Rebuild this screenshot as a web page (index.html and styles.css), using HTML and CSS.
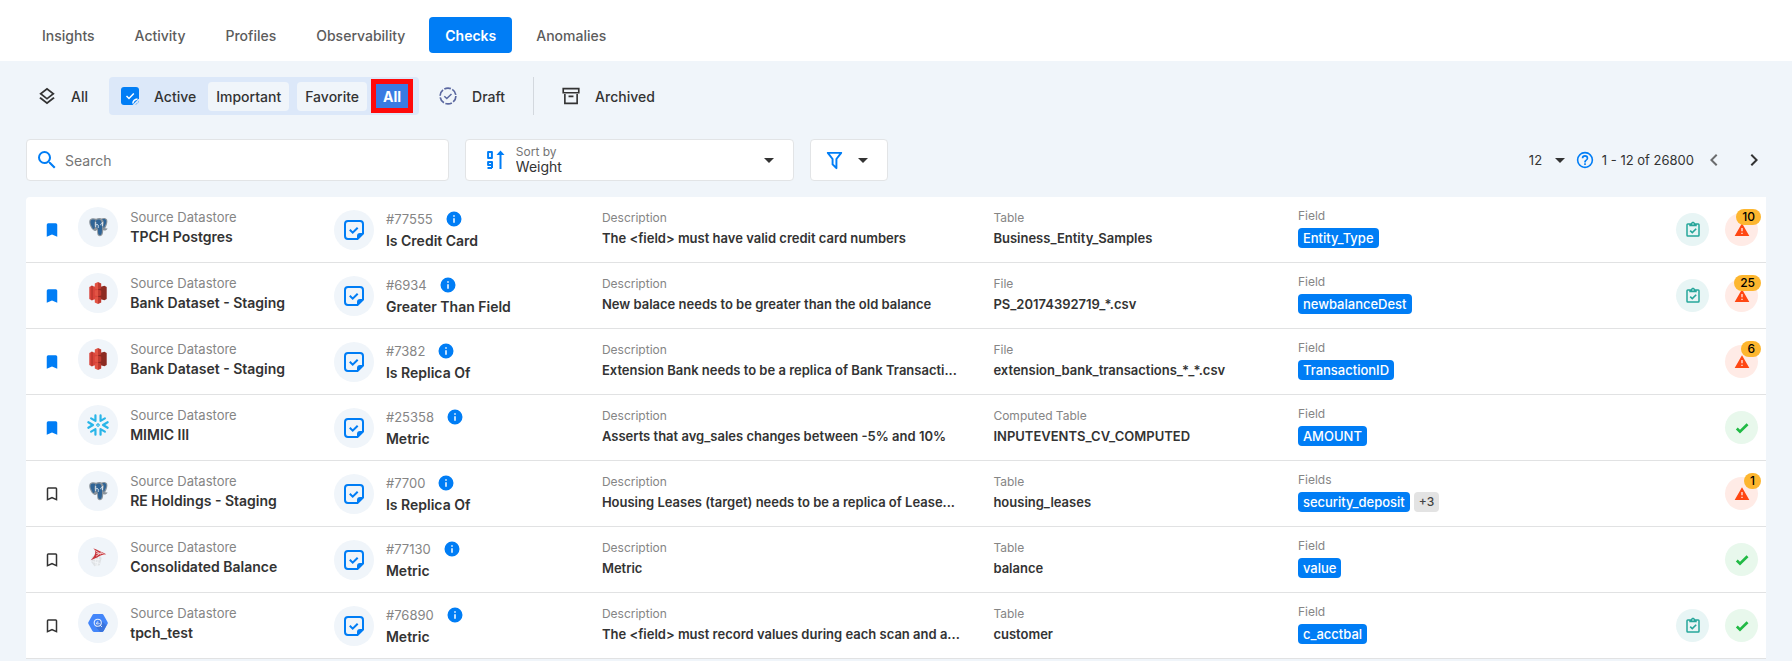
FILE: index.html
```html
<!DOCTYPE html>
<html lang="en">
<head>
    <meta charset="UTF-8">
    <meta name="viewport" content="width=device-width, initial-scale=1.0">
    <title>Checks</title>
    <link rel="stylesheet" href="styles.css">
</head>
<body>
    <!-- Icon sprite -->
    <svg class="sprite" aria-hidden="true">
        <symbol id="i-layers" viewBox="2 1 20 21"><path d="M12 18.540l7.370-5.740L21 14.070l-9 7-9-7 1.620-1.260L12 18.540zM12 16L3 9l9-7 9 7-9 7zm0-11.470L6.260 9 12 13.470 17.740 9 12 4.530z"/></symbol>
        <symbol id="i-active" viewBox="0 0 18 18"><path d="M3 0h12a3 3 0 0 1 3 3v8.500L11.500 18H3a3 3 0 0 1-3-3V3a3 3 0 0 1 3-3z"/><path d="M14 17.500a6 6 0 0 0 4-4l-.3 1.500-2.200 2.200z"/><path d="M5.500 9l2.500 2.500 4.800-5M11.800 16.500c.3-2.300 2.100-4.200 4.700-4.500" fill="none" stroke="#fff" stroke-width="1.500"/></symbol>
        <symbol id="i-draft" viewBox="0 0 18 18"><circle cx="9" cy="9" r="7.900" fill="none" stroke="currentColor" stroke-width="1.700" stroke-dasharray="6.700 1.600"/><path d="M5.300 9.200l2.500 2.300 4.700-4.500" fill="none" stroke="currentColor" stroke-width="1.500"/></symbol>
        <symbol id="i-archive" viewBox="1 1 22 22"><path d="M20.500 22h-17V9.500h2V20h13V9.500h2V22zM1.500 2h21v7h-21V2zm2 2v3h17V4h-17zM9 11.500h6v2H9z"/></symbol>
        <symbol id="i-search" viewBox="0 0 24 24"><path d="M9.500 3A6.500 6.500 0 0 1 16 9.500c0 1.610-.59 3.090-1.560 4.230l.27.270h.79l5 5-1.500 1.500-5-5v-.79l-.27-.27A6.516 6.516 0 0 1 9.500 16 6.500 6.500 0 0 1 3 9.500 6.500 6.500 0 0 1 9.500 3m0 2C7 5 5 7 5 9.500S7 14 9.500 14 14 12 14 9.500 12 5 9.500 5z"/></symbol>
        <symbol id="i-sort" viewBox="0 0 18 20"><path d="M1.100 2h3.800v6H1.100zM5 18H.5M5 15H1.100v-3H5v6" fill="none" stroke="currentColor" stroke-width="2" stroke-linejoin="round"/><path d="M13.500 19V3" fill="none" stroke="currentColor" stroke-width="2"/><path d="M9.500 5l4-4.500 4 4.500z"/></symbol>
        <symbol id="i-filter" viewBox="0 0 24 24"><path d="M15 19.880c.04.300-.06.620-.29.830a.996.996 0 0 1-1.410 0L9.290 16.700a.989.989 0 0 1-.29-.83v-5.120L4.210 4.620a1 1 0 0 1 .17-1.400c.19-.14.400-.22.620-.22h14c.22 0 .43.080.62.220a1 1 0 0 1 .17 1.400L15 10.750v9.130M7.040 5L11 10.060v5.520l2 2v-7.530L16.960 5H7.040z"/></symbol>
        <symbol id="i-caret" viewBox="0 0 10 5"><path d="M0 0h10L5 5z"/></symbol>
        <symbol id="i-help" viewBox="1 1 22 22"><path d="M11 18h2v-2h-2v2m1-16A10 10 0 0 0 2 12a10 10 0 0 0 10 10 10 10 0 0 0 10-10A10 10 0 0 0 12 2m0 18c-4.410 0-8-3.590-8-8s3.590-8 8-8 8 3.590 8 8-3.590 8-8 8m0-14a4 4 0 0 0-4 4h2a2 2 0 0 1 2-2 2 2 0 0 1 2 2c0 2-3 1.750-3 5h2c0-2.250 3-2.500 3-5a4 4 0 0 0-4-4z"/></symbol>
        <symbol id="i-left" viewBox="0 0 24 24"><path d="M15.410 16.580L10.830 12l4.580-4.590L14 6l-6 6 6 6 1.410-1.420z"/></symbol>
        <symbol id="i-right" viewBox="0 0 24 24"><path d="M8.590 16.580L13.170 12 8.590 7.410 10 6l6 6-6 6-1.410-1.420z"/></symbol>
        <symbol id="i-bookmark" viewBox="0 0 24 24"><path d="M17 3H7a2 2 0 0 0-2 2v16l7-3 7 3V5a2 2 0 0 0-2-2z"/></symbol>
        <symbol id="i-bookmark-o" viewBox="0 0 24 24"><path d="M17 18l-5-2.180L7 18V5h10m0-2H7a2 2 0 0 0-2 2v16l7-3 7 3V5a2 2 0 0 0-2-2z"/></symbol>
        <symbol id="i-check-note" viewBox="0 0 20 20"><path d="M13.500 19H4a3 3 0 0 1-3-3V4a3 3 0 0 1 3-3h12a3 3 0 0 1 3 3v9.500L13.500 19z" fill="none" stroke="currentColor" stroke-width="2"/><path d="M13 19.500V16a3 3 0 0 1 3-3h3.500z"/><path d="M5.800 9.800l2.900 2.900 5-5" fill="none" stroke="currentColor" stroke-width="2"/></symbol>
        <symbol id="i-info" viewBox="0 0 24 24"><path d="M13 9h-2V7h2m0 10h-2v-6h2m-1-9A10 10 0 0 0 2 12a10 10 0 0 0 10 10 10 10 0 0 0 10-10A10 10 0 0 0 12 2z"/></symbol>
        <symbol id="i-clipboard" viewBox="0 0 24 24"><path d="M19 3h-4.180C14.400 1.840 13.300 1 12 1s-2.400.84-2.820 2H5a2 2 0 0 0-2 2v14a2 2 0 0 0 2 2h14a2 2 0 0 0 2-2V5a2 2 0 0 0-2-2m-7 0a1 1 0 1 1 0 2 1 1 0 0 1 0-2M7 7h10V5h2v14H5V5h2v2m.500 6.500L9 12l2 2 4.500-4.500L17 11l-6 6-3.500-3.500z"/></symbol>
        <symbol id="i-alert" viewBox="0 0 24 24"><path d="M13 14h-2V9h2m0 9h-2v-2h2M1 21h22L12 2 1 21z"/></symbol>
        <symbol id="i-tick" viewBox="0 0 24 24"><path d="M9 20.420l-6.210-6.210 2.830-2.830L9 14.770l9.880-9.890 2.830 2.830L9 20.420z"/></symbol>
        <symbol id="i-postgres" viewBox="0 0 24 24">
            <path d="M3 4c2-2 5-1.800 7-1 2-1 4-1 5.500-.3C18 1.500 21 2 22 4c.8 2.500-.5 6.500-2.200 9.300l2.700.2c-.6 1.700-2.600 2.500-4.800 2.100-.2 2.600-.2 6.400-3.700 6.400-3.200 0-2.800-3.800-3-7-1 1.500-2.800 1.800-4 .5C4.500 14 1 7 3 4z" fill="#8b949c"/>
            <path d="M4 5c1.500-1.600 4-1.400 5.500-.6C8 6 8 9 8.500 12c.2 1.500-1 3-2.200 1.500C4.500 11 3 7 4 5zM10 5c1.500-1.600 4-1.600 5.200.2 1.300 2 .8 4.800 1.300 7.300-.4 3 .4 8.300-2.600 8.300-2.300 0-1.700-4-2-6.800L9.700 12C9.500 10 8.800 7 10 5zM16.500 3.700c1.500-.7 3.800-.3 4.400 1 .7 2-.9 5.800-2.600 8.300-1-2-.2-4 .2-6-.3-1.500-.8-2.500-2-3.300z" fill="#2f6496"/>
            <path d="M9.500 6.500v5.500M10 9.500c2.500-1 2.500 1 2.200 3.500M16.800 6.500v4.500M14.800 10c.2-1.500 1-2 2-2" fill="none" stroke="#e8eff5"/>
        </symbol>
        <symbol id="i-s3" viewBox="0 0 24 24">
            <path d="M2.500 5.500L5 4l7 2v12l-7 2-2.500-1.500z" fill="#d9433a"/><path d="M21.500 5.500L19 4l-7 2v12l7 2 2.500-1.500z" fill="#8c2b22"/>
            <path d="M12 0l3.500 1.700V7L12 8zM12 24l3.500-1.700V17L12 16zM12 8.500l3.500.7v5.600l-3.500.7z" fill="#c23a30"/>
            <path d="M12 0L8.500 1.700V7L12 8zM12 24l-3.500-1.700V17L12 16zM12 8.500l-3.500.7v5.600l3.500.7z" fill="#e25444"/>
            <path d="M5.500 4v16" stroke="#a92f26"/>
        </symbol>
        <symbol id="i-snowflake" viewBox="0 0 24 24">
            <g fill="none" stroke="#29b5e8" stroke-width="2.400" stroke-linecap="round" stroke-linejoin="round">
                <path d="M9.200 1.500v6L4.500 4.800M14.800 1.500v6l4.700-2.700M9.200 22.500v-6l-4.700 2.700M14.800 22.500v-6l4.700 2.700"/>
                <path d="M1.500 9l5 3-5 3M22.500 9l-5 3 5 3"/>
                <path d="M12 10.500l1.500 1.500-1.500 1.500-1.500-1.500z" stroke-width="1.200"/>
            </g>
        </symbol>
        <symbol id="i-sqlserver" viewBox="0 0 24 24">
            <path d="M5 12l7-4 4 5-2 8-6 1-3-4z" fill="#dfe2e5"/><path d="M6 14l8 1M6 17l8 2M9 11l1 11M13 10l-2 12" stroke="#f3f5f7" fill="none"/>
            <path d="M6.500 2c2 1.500 4 2 7 3.500 2.500 1.200 5 2 7.500 3.500-4 .2-7 1.500-10 3.500L4 15.500C7.500 12 9 9 9 7 9 5 8 3.500 6.500 2z" fill="#c9353b"/>
            <path d="M9 5l6 4M10 11l6-4M10 8h8" stroke="#f1d3d5" fill="none"/>
        </symbol>
        <symbol id="i-bigquery" viewBox="-1 -1 26 26">
            <path d="M7 1.500h10a2 2 0 0 1 1.600.9l4.800 8.700a2 2 0 0 1 0 1.800l-4.800 8.700a2 2 0 0 1-1.600.9H7a2 2 0 0 1-1.600-.9L.6 12.900a2 2 0 0 1 0-1.800l4.800-8.700A2 2 0 0 1 7 1.500z" fill="#4386fa"/>
            <path d="M14 8l8 6.800-3.400 6.800a2 2 0 0 1-1.600.9h-2.500L8.500 15.500z" fill="#3b74dc"/>
            <circle cx="11.700" cy="11.700" r="4.200" fill="none" stroke="#e6effe" stroke-width="1.300"/>
            <path d="M14.700 14.700l2 2M10.300 11.500v2M11.800 10v4M13.300 12v1.500" stroke="#e6effe" stroke-width="1.100"/>
        </symbol>
    </svg>

    <header class="header">
        <nav class="tabs">
            <a class="tab" href="#">Insights</a>
            <a class="tab" href="#">Activity</a>
            <a class="tab" href="#">Profiles</a>
            <a class="tab" href="#">Observability</a>
            <a class="tab active" href="#">Checks</a>
            <a class="tab" href="#">Anomalies</a>
        </nav>
    </header>

    <main class="content">
        <div class="status-bar">
            <button class="status"><svg class="icon-status"><use href="#i-layers"/></svg>All</button>
            <div class="status-group">
                <button class="status status-active"><svg class="icon-status blue"><use href="#i-active"/></svg>Active</button>
                <button class="chip">Important</button>
                <button class="chip">Favorite</button>
                <button class="chip chip-selected">All</button>
            </div>
            <button class="status status-draft"><svg class="icon-status"><use href="#i-draft"/></svg>Draft</button>
            <span class="divider"></span>
            <button class="status status-archived"><svg class="icon-status"><use href="#i-archive"/></svg>Archived</button>
        </div>

        <div class="filter-bar">
            <div class="box search">
                <svg class="icon-search"><use href="#i-search"/></svg>
                <input type="text" placeholder="Search" aria-label="Search">
            </div>
            <div class="box sort">
                <svg class="icon-sort"><use href="#i-sort"/></svg>
                <div class="sort-text">
                    <label for="sort">Sort by</label>
                    <select id="sort"><option>Weight</option></select>
                </div>
                <svg class="caret"><use href="#i-caret"/></svg>
            </div>
            <button class="box filter" aria-label="Filter">
                <svg class="icon-filter"><use href="#i-filter"/></svg>
                <svg class="caret"><use href="#i-caret"/></svg>
            </button>
            <div class="pagination">
                <select class="page-size" aria-label="Items per page"><option>12</option></select>
                <svg class="caret"><use href="#i-caret"/></svg>
                <svg class="icon-help"><use href="#i-help"/></svg>
                <span class="range">1 - 12 of 26800</span>
                <button class="page-btn" aria-label="Previous page" disabled><svg><use href="#i-left"/></svg></button>
                <button class="page-btn" aria-label="Next page"><svg><use href="#i-right"/></svg></button>
            </div>
        </div>

        <table class="checks">
            <colgroup>
                <col class="col-mark"><col class="col-store"><col class="col-check"><col class="col-desc"><col class="col-table"><col class="col-field"><col class="col-actions">
            </colgroup>
            <tbody>
                <tr>
                    <td><button class="mark on" aria-label="Favorite"><svg><use href="#i-bookmark"/></svg></button></td>
                    <td><div class="store"><span class="circle"><svg><use href="#i-postgres"/></svg></span><div><p class="label">Source Datastore</p><p class="name">TPCH Postgres</p></div></div></td>
                    <td><div class="check"><span class="circle"><svg><use href="#i-check-note"/></svg></span><div><p class="label check-id">#77555<svg><use href="#i-info"/></svg></p><p class="name">Is Credit Card</p></div></div></td>
                    <td><div class="info"><p class="label">Description</p><p class="value">The &lt;field&gt; must have valid credit card numbers</p></div></td>
                    <td><div class="info"><p class="label">Table</p><p class="value">Business_Entity_Samples</p></div></td>
                    <td><div class="field"><p class="label">Field</p><span class="tag">Entity_Type</span></div></td>
                    <td><div class="actions"><span class="badge-icon task"><svg><use href="#i-clipboard"/></svg></span><span class="badge-icon alert"><svg><use href="#i-alert"/></svg><b class="count">10</b></span></div></td>
                </tr>
                <tr>
                    <td><button class="mark on" aria-label="Favorite"><svg><use href="#i-bookmark"/></svg></button></td>
                    <td><div class="store"><span class="circle"><svg><use href="#i-s3"/></svg></span><div><p class="label">Source Datastore</p><p class="name">Bank Dataset - Staging</p></div></div></td>
                    <td><div class="check"><span class="circle"><svg><use href="#i-check-note"/></svg></span><div><p class="label check-id">#6934<svg><use href="#i-info"/></svg></p><p class="name">Greater Than Field</p></div></div></td>
                    <td><div class="info"><p class="label">Description</p><p class="value">New balace needs to be greater than the old balance</p></div></td>
                    <td><div class="info"><p class="label">File</p><p class="value">PS_20174392719_*.csv</p></div></td>
                    <td><div class="field"><p class="label">Field</p><span class="tag">newbalanceDest</span></div></td>
                    <td><div class="actions"><span class="badge-icon task"><svg><use href="#i-clipboard"/></svg></span><span class="badge-icon alert"><svg><use href="#i-alert"/></svg><b class="count">25</b></span></div></td>
                </tr>
                <tr>
                    <td><button class="mark on" aria-label="Favorite"><svg><use href="#i-bookmark"/></svg></button></td>
                    <td><div class="store"><span class="circle"><svg><use href="#i-s3"/></svg></span><div><p class="label">Source Datastore</p><p class="name">Bank Dataset - Staging</p></div></div></td>
                    <td><div class="check"><span class="circle"><svg><use href="#i-check-note"/></svg></span><div><p class="label check-id">#7382<svg><use href="#i-info"/></svg></p><p class="name">Is Replica Of</p></div></div></td>
                    <td><div class="info"><p class="label">Description</p><p class="value">Extension Bank needs to be a replica of Bank Transacti...</p></div></td>
                    <td><div class="info"><p class="label">File</p><p class="value">extension_bank_transactions_*_*.csv</p></div></td>
                    <td><div class="field"><p class="label">Field</p><span class="tag">TransactionID</span></div></td>
                    <td><div class="actions"><span class="badge-icon alert"><svg><use href="#i-alert"/></svg><b class="count">6</b></span></div></td>
                </tr>
                <tr>
                    <td><button class="mark on" aria-label="Favorite"><svg><use href="#i-bookmark"/></svg></button></td>
                    <td><div class="store"><span class="circle"><svg><use href="#i-snowflake"/></svg></span><div><p class="label">Source Datastore</p><p class="name">MIMIC III</p></div></div></td>
                    <td><div class="check"><span class="circle"><svg><use href="#i-check-note"/></svg></span><div><p class="label check-id">#25358<svg><use href="#i-info"/></svg></p><p class="name">Metric</p></div></div></td>
                    <td><div class="info"><p class="label">Description</p><p class="value">Asserts that avg_sales changes between -5% and 10%</p></div></td>
                    <td><div class="info"><p class="label">Computed Table</p><p class="value">INPUTEVENTS_CV_COMPUTED</p></div></td>
                    <td><div class="field"><p class="label">Field</p><span class="tag">AMOUNT</span></div></td>
                    <td><div class="actions"><span class="badge-icon passed"><svg><use href="#i-tick"/></svg></span></div></td>
                </tr>
                <tr>
                    <td><button class="mark" aria-label="Favorite"><svg><use href="#i-bookmark-o"/></svg></button></td>
                    <td><div class="store"><span class="circle"><svg><use href="#i-postgres"/></svg></span><div><p class="label">Source Datastore</p><p class="name">RE Holdings - Staging</p></div></div></td>
                    <td><div class="check"><span class="circle"><svg><use href="#i-check-note"/></svg></span><div><p class="label check-id">#7700<svg><use href="#i-info"/></svg></p><p class="name">Is Replica Of</p></div></div></td>
                    <td><div class="info"><p class="label">Description</p><p class="value">Housing Leases (target) needs to be a replica of Lease...</p></div></td>
                    <td><div class="info"><p class="label">Table</p><p class="value">housing_leases</p></div></td>
                    <td><div class="field"><p class="label">Fields</p><span class="tag">security_deposit</span><span class="tag more">+3</span></div></td>
                    <td><div class="actions"><span class="badge-icon alert"><svg><use href="#i-alert"/></svg><b class="count">1</b></span></div></td>
                </tr>
                <tr>
                    <td><button class="mark" aria-label="Favorite"><svg><use href="#i-bookmark-o"/></svg></button></td>
                    <td><div class="store"><span class="circle"><svg><use href="#i-sqlserver"/></svg></span><div><p class="label">Source Datastore</p><p class="name">Consolidated Balance</p></div></div></td>
                    <td><div class="check"><span class="circle"><svg><use href="#i-check-note"/></svg></span><div><p class="label check-id">#77130<svg><use href="#i-info"/></svg></p><p class="name">Metric</p></div></div></td>
                    <td><div class="info"><p class="label">Description</p><p class="value">Metric</p></div></td>
                    <td><div class="info"><p class="label">Table</p><p class="value">balance</p></div></td>
                    <td><div class="field"><p class="label">Field</p><span class="tag">value</span></div></td>
                    <td><div class="actions"><span class="badge-icon passed"><svg><use href="#i-tick"/></svg></span></div></td>
                </tr>
                <tr>
                    <td><button class="mark" aria-label="Favorite"><svg><use href="#i-bookmark-o"/></svg></button></td>
                    <td><div class="store"><span class="circle"><svg><use href="#i-bigquery"/></svg></span><div><p class="label">Source Datastore</p><p class="name">tpch_test</p></div></div></td>
                    <td><div class="check"><span class="circle"><svg><use href="#i-check-note"/></svg></span><div><p class="label check-id">#76890<svg><use href="#i-info"/></svg></p><p class="name">Metric</p></div></div></td>
                    <td><div class="info"><p class="label">Description</p><p class="value">The &lt;field&gt; must record values during each scan and a...</p></div></td>
                    <td><div class="info"><p class="label">Table</p><p class="value">customer</p></div></td>
                    <td><div class="field"><p class="label">Field</p><span class="tag">c_acctbal</span></div></td>
                    <td><div class="actions"><span class="badge-icon task"><svg><use href="#i-clipboard"/></svg></span><span class="badge-icon passed"><svg><use href="#i-tick"/></svg></span></div></td>
                </tr>
            </tbody>
        </table>
    </main>
</body>
</html>
```

FILE: styles.css
```css
* {
    margin: 0;
    padding: 0;
    box-sizing: border-box;
}

body {
    font-family: Inter, "Open Sans", sans-serif;
    font-size: 14px;
    color: #333;
    background: #f0f5fa;
}

button,
input,
select {
    font: inherit;
    color: inherit;
    background: transparent;
    border: none;
    outline: none;
}

button {
    cursor: pointer;
}

svg {
    display: block;
    flex-shrink: 0;
    fill: currentColor;
}

.sprite {
    position: absolute;
    width: 0;
    height: 0;
}

/* Top tabs */
.header {
    background: #fff;
    padding: 17px 26px 8px;
}

.tabs {
    display: flex;
    gap: 8px;
}

.tab {
    padding: 1px 16px 0;
    line-height: 35px;
    font-weight: 500;
    color: #5c5c5c;
    text-decoration: none;
    border-radius: 4px;
}

.tab.active {
    background: #007df5;
    color: #fff;
    font-weight: 600;
}

.content {
    padding: 16px 26px 0;
}

/* Status bar */
.status-bar {
    display: flex;
    align-items: center;
    height: 38px;
    padding-left: 12px;
    margin-bottom: 24px;
}

.status {
    display: flex;
    align-items: center;
    gap: 15px;
    font-weight: 500;
}

.icon-status {
    width: 18px;
    height: 18px;
}

.blue {
    color: #007df5;
}

.status-group {
    display: flex;
    align-items: center;
    gap: 8px;
    height: 38px;
    margin-left: 21px;
    padding: 0 10px 0 12px;
    background: #dce8f9;
    border-radius: 4px;
}

.status-active {
    margin-right: 4px;
}

.chip {
    height: 29px;
    padding: 0 8px;
    background: #f0f5fa;
    border-radius: 4px;
    font-weight: 500;
}

.chip-selected {
    height: 26px;
    background: #397be2;
    color: #fff;
    font-weight: 700;
    border-radius: 0;
    outline: 5px solid #ff0a0a;
    outline-offset: -1px;
}

.status-draft {
    margin: 0 28px 0 20px;
}

.status-draft svg {
    color: #5b68a0;
}

.divider {
    width: 1px;
    height: 38px;
    background: #d3d8de;
}

.status-archived {
    margin-left: 28px;
}

/* Filter bar */
.filter-bar {
    display: flex;
    align-items: center;
    gap: 16px;
    margin-bottom: 16px;
}

.box {
    display: flex;
    align-items: center;
    height: 42px;
    background: #fff;
    border: 1px solid #e2e4e6;
    border-radius: 4px;
}

.search {
    width: 24.3%;
    padding: 0 8px;
    gap: 6px;
}

.search input {
    flex: 1;
    min-width: 0;
}

.search input::placeholder {
    color: #757575;
    opacity: 1;
}

.icon-search {
    width: 24px;
    height: 24px;
    color: #007df5;
}

.sort {
    width: 18.9%;
    padding: 0 19px 0 21px;
    gap: 11px;
}

.icon-sort {
    width: 18px;
    height: 20px;
    color: #007df5;
}

.sort-text {
    flex: 1;
    display: flex;
    flex-direction: column;
}

.sort-text label {
    font-size: 12px;
    line-height: 14px;
    color: #757575;
}

.sort-text select,
.page-size {
    appearance: none;
    line-height: 16px;
}

.page-size,
.range {
    font-size: 13px;
}

.caret {
    width: 10px;
    height: 5px;
}

.filter {
    padding: 0 19px 0 12px;
    gap: 12px;
}

.icon-filter {
    width: 23px;
    height: 23px;
    color: #007df5;
}

.pagination {
    display: flex;
    align-items: center;
    margin-left: auto;
}

.page-size {
    margin-right: 12px;
}

.icon-help {
    width: 18px;
    height: 18px;
    margin: 0 8px 0 11px;
    color: #007df5;
}

.page-btn {
    margin-left: 8px;
}

.page-btn + .page-btn {
    margin-left: 16px;
}

.page-btn svg {
    width: 24px;
    height: 24px;
}

.page-btn:disabled {
    opacity: 0.7;
}

/* Checks list */
.checks {
    width: 100%;
    table-layout: fixed;
    border-collapse: separate;
    border-spacing: 0;
    background: #fff;
    border-radius: 4px 0 0 0;
}

.col-mark { width: 3%; }
.col-store { width: 14.7%; }
.col-check { width: 15.4%; }
.col-desc { width: 22.5%; }
.col-table { width: 17.5%; }
.col-actions { width: 8%; }

.checks td {
    height: 66px;
    border-bottom: 1px solid #e1e2e3;
    vertical-align: middle;
}

.mark {
    display: block;
    margin: 0 auto;
}

.mark svg {
    width: 18px;
    height: 18px;
}

.mark.on {
    color: #007df5;
}

.store,
.check {
    display: flex;
    align-items: center;
    gap: 12px;
}

.store,
.field {
    padding-bottom: 6px;
}

.info {
    padding-bottom: 4px;
}

.circle {
    display: flex;
    align-items: center;
    justify-content: center;
    width: 40px;
    height: 40px;
    border-radius: 50%;
    background: #f0f5fa;
}

.circle svg {
    width: 22px;
    height: 22px;
}

.check .circle {
    color: #007df5;
}

.check .circle svg {
    width: 20px;
    height: 20px;
}

.label {
    font-size: 12px;
    line-height: 20px;
    color: #858585;
}

.name,
.value {
    font-weight: 600;
    line-height: 20px;
    white-space: nowrap;
}

.value {
    max-width: 360px;
    font-size: 13px;
    overflow: hidden;
    text-overflow: ellipsis;
}

.check-id {
    display: flex;
    align-items: center;
    gap: 12px;
}

.store .label,
.check .label {
    font-size: 13px;
}

.check .label,
.check .name {
    line-height: 22px;
}

.check-id svg {
    width: 18px;
    height: 18px;
    color: #007df5;
}

.tag {
    display: inline-block;
    margin: 2px 4px 0 0;
    padding: 0 5px;
    font-size: 13px;
    font-weight: 500;
    line-height: 20px;
    color: #fff;
    background: #007df5;
    border-radius: 4px;
    vertical-align: top;
}

.tag.more {
    font-size: 12px;
    color: #444;
    background: #e3e3e3;
}

.actions {
    display: flex;
    justify-content: flex-end;
    gap: 16px;
    padding-right: 8px;
}

.badge-icon {
    position: relative;
    display: flex;
    align-items: center;
    justify-content: center;
    width: 33px;
    height: 33px;
    border-radius: 50%;
}

.badge-icon svg {
    width: 16px;
    height: 16px;
}

.task {
    color: #26a69a;
    background: #e8f5f5;
}

.task svg {
    width: 18px;
    height: 18px;
}

.alert {
    color: #ff4713;
    background: #ffebe6;
}

.passed {
    color: #21ba45;
    background: #e8f8ec;
}

.count {
    position: absolute;
    top: -4px;
    right: -3px;
    padding: 0 6px;
    font-size: 12px;
    font-weight: 500;
    line-height: 16px;
    color: #000;
    background: #fdb62f;
    border-radius: 8px;
}
```
